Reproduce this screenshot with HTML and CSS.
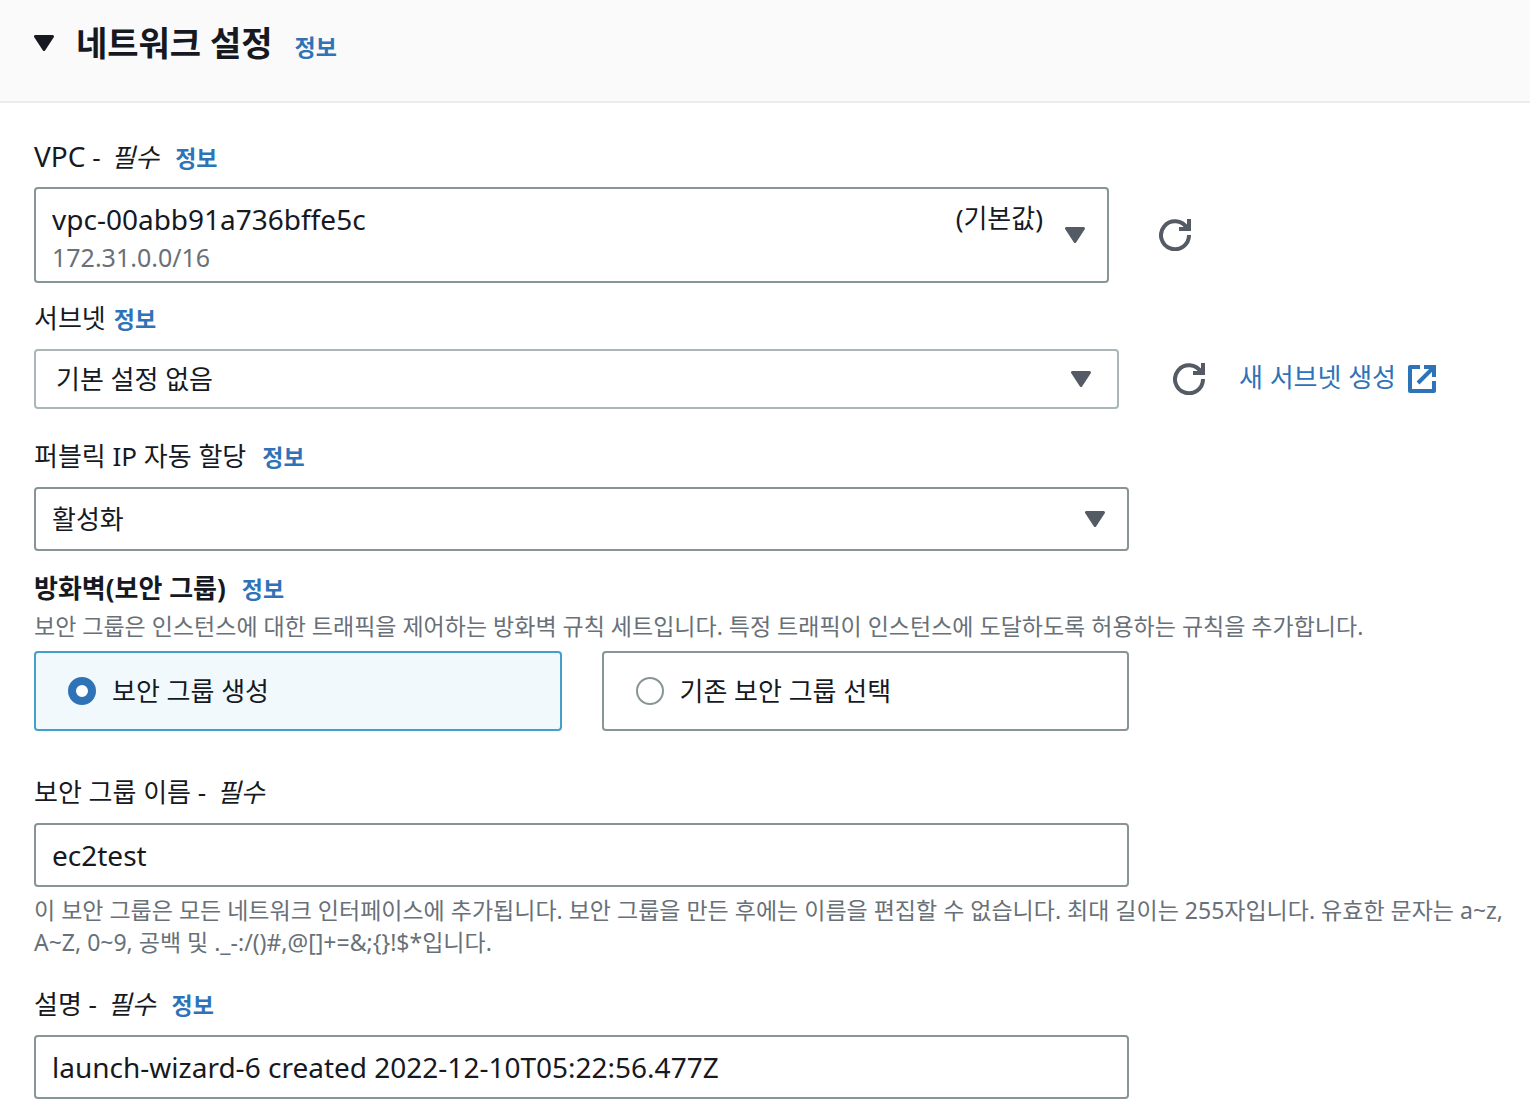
FILE: index.html
```html
<!DOCTYPE html>
<html lang="ko">
<head>
  <meta charset="UTF-8">
  <meta name="viewport" content="width=device-width, initial-scale=1.0">
  <title>네트워크 설정</title>
  <link rel="stylesheet" href="styles.css">
</head>
<body>
  <!-- Shared icons -->
  <svg class="icon-defs" aria-hidden="true">
    <symbol id="icon-caret" viewBox="0 0 20 16">
      <path d="M1.500 1.500h17L10 14.500z" fill="currentColor" stroke="currentColor" stroke-width="3" stroke-linejoin="round"/>
    </symbol>
    <symbol id="icon-refresh" viewBox="0 0 32 32">
      <path d="M30 16A14 14 0 1 1 28 9" fill="none" stroke="currentColor" stroke-width="4"/>
      <path d="M20 10h10V0" fill="none" stroke="currentColor" stroke-width="4"/>
    </symbol>
    <symbol id="icon-external" viewBox="0 0 28 28">
      <path d="M12 2H2v24h24V16" fill="none" stroke="currentColor" stroke-width="4" stroke-linejoin="round"/>
      <path d="M16 2h10v10M26 2L10 18" fill="none" stroke="currentColor" stroke-width="4"/>
    </symbol>
  </svg>

  <header class="panel-header">
    <button type="button" class="toggle" aria-expanded="true">
      <svg class="caret"><use href="#icon-caret"/></svg>
      <span class="panel-title">네트워크 설정</span>
    </button>
    <a href="#" class="info">정보</a>
  </header>

  <main class="panel-body">
    <div class="field">
      <div class="field-label">
        <label for="vpc"><span class="latin">VPC</span> - <em>필수</em></label>
        <a href="#" class="info">정보</a>
      </div>
      <div class="control-row">
        <div class="select-box select-vpc">
          <select id="vpc">
            <option>vpc-00abb91a736bffe5c</option>
          </select>
          <span class="vpc-default">(기본값)</span>
          <span class="vpc-cidr">172.31.0.0/16</span>
          <svg class="caret"><use href="#icon-caret"/></svg>
        </div>
        <button type="button" class="refresh" aria-label="VPC 새로 고침">
          <svg><use href="#icon-refresh"/></svg>
        </button>
      </div>
    </div>

    <div class="field field-subnet">
      <div class="field-label tight">
        <label for="subnet">서브넷</label>
        <a href="#" class="info">정보</a>
      </div>
      <div class="control-row">
        <div class="select-box select-subnet">
          <select id="subnet">
            <option>기본 설정 없음</option>
          </select>
          <svg class="caret"><use href="#icon-caret"/></svg>
        </div>
        <button type="button" class="refresh" aria-label="서브넷 새로 고침">
          <svg><use href="#icon-refresh"/></svg>
        </button>
        <a href="#" class="create-link">새 서브넷 생성
          <svg><use href="#icon-external"/></svg>
        </a>
      </div>
    </div>

    <div class="field field-ip">
      <div class="field-label">
        <label for="public-ip">퍼블릭 IP 자동 할당</label>
        <a href="#" class="info">정보</a>
      </div>
      <div class="select-box">
        <select id="public-ip">
          <option>활성화</option>
        </select>
        <svg class="caret"><use href="#icon-caret"/></svg>
      </div>
    </div>

    <div class="field field-firewall" role="radiogroup" aria-labelledby="firewall-label">
      <div class="field-label">
        <strong id="firewall-label">방화벽(보안 그룹)</strong>
        <a href="#" class="info">정보</a>
      </div>
      <p class="description">보안 그룹은 인스턴스에 대한 트래픽을 제어하는 방화벽 규칙 세트입니다. 특정 트래픽이 인스턴스에 도달하도록 허용하는 규칙을 추가합니다.</p>
      <div class="tiles">
        <label class="tile">
          <input type="radio" name="firewall" checked>
          <span>보안 그룹 생성</span>
        </label>
        <label class="tile">
          <input type="radio" name="firewall">
          <span>기존 보안 그룹 선택</span>
        </label>
      </div>
    </div>

    <div class="field field-name">
      <div class="field-label">
        <label for="sg-name">보안 그룹 이름 - <em>필수</em></label>
      </div>
      <input type="text" class="text-input" id="sg-name" value="ec2test">
      <p class="description">이 보안 그룹은 모든 네트워크 인터페이스에 추가됩니다. 보안 그룹을 만든 후에는 이름을 편집할 수 없습니다. 최대 길이는 255자입니다. 유효한 문자는 a~z, A~Z, 0~9, 공백 및 ._-:/()#,@[]+=&amp;;{}!$*입니다.</p>
    </div>

    <div class="field field-description">
      <div class="field-label">
        <label for="sg-description">설명 - <em>필수</em></label>
        <a href="#" class="info">정보</a>
      </div>
      <input type="text" class="text-input" id="sg-description" value="launch-wizard-6 created 2022-12-10T05:22:56.477Z">
    </div>
  </main>
</body>
</html>
```
FILE: styles.css
```css
* {
  box-sizing: border-box;
}

body {
  margin: 0;
  background-color: #ffffff;
  color: #16191f;
  font-family: "Noto Sans", "Noto Sans CJK KR", sans-serif;
  font-size: 26px;
  line-height: 40px;
}

button, select, input {
  font: inherit;
  color: inherit;
}

p {
  margin: 0;
}

a {
  color: #2e73b8;
  text-decoration: none;
}

.icon-defs {
  display: none;
}

.caret {
  width: 20px;
  height: 16px;
}

/* Header */
.panel-header {
  display: flex;
  align-items: baseline;
  gap: 22px;
  padding: 15px 34px 30px;
  background-color: #fafafa;
  border-bottom: 2px solid #eaeded;
}

.toggle {
  display: flex;
  align-items: baseline;
  gap: 22px;
  padding: 0;
  border: none;
  background: none;
  cursor: pointer;
}

.toggle .caret {
  align-self: center;
}

.panel-title {
  font-size: 34px;
  font-weight: bold;
  line-height: 56px;
}

.info {
  font-size: 23px;
  font-weight: bold;
}

/* Fields */
.panel-body {
  padding: 33px 36px 20px 34px;
}

.field-label {
  display: flex;
  align-items: baseline;
  gap: 16px;
  height: 40px;
  margin-bottom: 11px;
}

.field-label.tight {
  gap: 8px;
}

.field-label em {
  margin-left: 4px;
}

.latin {
  font-size: 28px;
}

.field-subnet {
  margin-top: 15px;
}

.field-ip {
  margin-top: 27px;
}

.field-firewall {
  margin-top: 17px;
}

.field-name {
  margin-top: 41px;
}

.field-description {
  margin-top: 26px;
}

.control-row {
  display: flex;
  align-items: center;
}

.select-box {
  display: grid;
  grid-template-columns: 1fr auto 20px;
  align-items: center;
  column-gap: 22px;
  width: 75%;
  height: 64px;
  padding-right: 22px;
  border: 2px solid #879596;
  border-radius: 4px;
  background-color: #ffffff;
  color: #545b64;
}

.select-box select {
  grid-area: 1 / 1 / -1 / -1;
  height: 100%;
  margin-right: -22px;
  padding: 0 16px;
  border: none;
  background: none;
  color: #16191f;
  appearance: none;
  cursor: pointer;
}

.select-box .caret {
  grid-area: 1 / 3 / -1 / 4;
  pointer-events: none;
}

.select-vpc {
  grid-template-rows: 58px 34px;
  width: calc(75% - 20px);
  height: 96px;
}

.select-vpc select {
  padding-bottom: 32px;
  font-size: 28px;
}

.vpc-default,
.vpc-cidr {
  pointer-events: none;
}

.vpc-default {
  grid-area: 1 / 2;
  color: #16191f;
}

.vpc-cidr {
  grid-area: 2 / 1;
  padding-left: 16px;
  font-size: 25px;
  line-height: 20px;
  color: #687078;
  align-self: start;
}

.select-subnet {
  width: calc(75% - 10px);
  height: 60px;
  padding-right: 26px;
  border-color: #aab7b8;
}

.select-subnet select {
  margin-right: -26px;
  padding: 0 20px;
}

.refresh {
  width: 32px;
  height: 32px;
  margin-left: 50px;
  padding: 0;
  border: none;
  background: none;
  color: #545b64;
  cursor: pointer;
}

.refresh svg {
  display: block;
  width: 32px;
  height: 32px;
}

.field-subnet .refresh {
  margin-left: 54px;
}

.create-link {
  display: flex;
  align-items: center;
  gap: 12px;
  margin-left: 34px;
  padding-bottom: 4px;
}

.create-link svg {
  width: 28px;
  height: 28px;
  margin-top: 4px;
}

.description {
  margin-right: -20px;
  font-size: 23px;
  line-height: 32px;
  color: #687078;
}

.field-firewall .field-label {
  margin-bottom: 2px;
}

/* Security group tiles */
.tiles {
  display: grid;
  grid-template-columns: 1fr 1fr;
  gap: 40px;
  width: 75%;
  margin-top: 9px;
}

.tile {
  display: flex;
  align-items: center;
  gap: 16px;
  height: 80px;
  padding: 0 32px;
  border: 2px solid #879596;
  border-radius: 4px;
  cursor: pointer;
}

.tile:has(input:checked) {
  border-color: #44a0c8;
  background-color: #f2f9fd;
}

.tile input {
  appearance: none;
  width: 28px;
  height: 28px;
  margin: 0;
  border: 2px solid #879596;
  border-radius: 50%;
  background-color: #ffffff;
}

.tile input:checked {
  border: 8px solid #2e73b8;
}

.text-input {
  display: block;
  width: 75%;
  height: 64px;
  padding: 0 16px;
  border: 2px solid #879596;
  border-radius: 4px;
  background-color: #ffffff;
  font-size: 28px;
}

.field-name .description {
  margin-top: 7px;
}
```
